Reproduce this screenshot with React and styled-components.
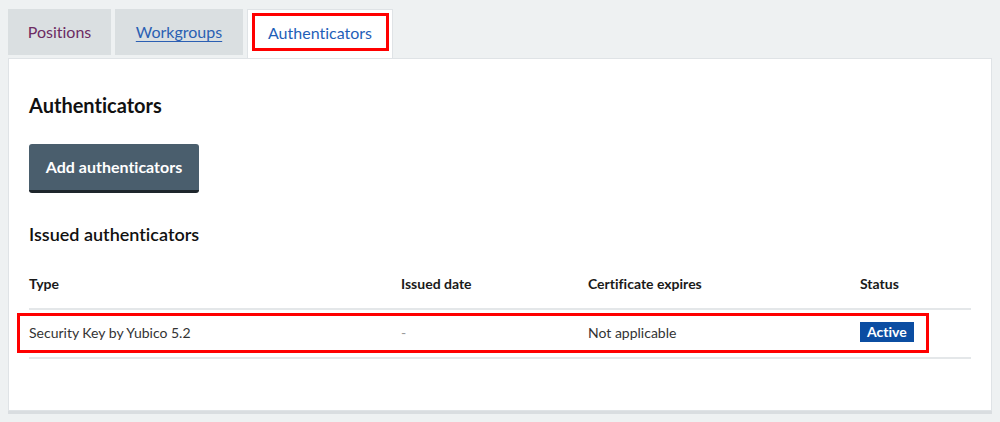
import React from "react";
import styled, { createGlobalStyle } from "styled-components";

const Global = createGlobalStyle`
  html, body { margin: 0; padding: 0; }
  body {
    background: #eef1f2;
    font-family: "Lato", "Noto Sans", sans-serif;
    font-variant-ligatures: none;
    color: #222;
  }
`;

const Page = styled.div`
  padding: 9px 8px 8px 8px;
  width: 984px;
`;

const TabList = styled.div`
  display: flex;
  gap: 4px;
  align-items: flex-end;
  height: 49px;
`;

const Tab = styled.a`
  box-sizing: border-box;
  display: flex;
  align-items: center;
  justify-content: center;
  width: ${(p) => p.$w}px;
  height: ${(p) => (p.$active ? 49 : 46)}px;
  align-self: flex-start;
  background: ${(p) => (p.$active ? "#fff" : "#dadfe1")};
  border: ${(p) => (p.$active ? "1px solid #dfe3e6" : "none")};
  border-bottom: none;
  margin-bottom: ${(p) => (p.$active ? "-1px" : "0")};
  position: relative;
  z-index: 1;
  font-size: 16px;
  color: ${(p) => p.$color};
  text-decoration: ${(p) => (p.$underline ? "underline" : "none")};
  text-underline-offset: 3px;
  padding-bottom: ${(p) => (p.$active ? "0" : "2px")};
`;

const Highlight = styled.span`
  box-sizing: border-box;
  display: flex;
  align-items: center;
  justify-content: center;
  width: 137px;
  height: 38px;
  border: 3px solid #f00;
  margin-top: -4px;
`;

const Panel = styled.section`
  box-sizing: border-box;
  background: #fff;
  border: 1px solid #dfe3e6;
  height: 353px;
  padding: 33px 20px 0 20px;
  box-shadow: 0 3px 0 #d9dde0;
`;

const Heading = styled.h2`
  margin: 0;
  font-size: 20px;
  font-weight: 700;
  color: #111;
  line-height: 26px;
`;

const Button = styled.button`
  box-sizing: border-box;
  margin-top: 26px;
  width: 170px;
  height: 49px;
  border: none;
  border-bottom: 3px solid #1e262c;
  border-radius: 3px;
  background: #4a5e6d;
  color: #fff;
  font-family: inherit;
  font-variant-ligatures: none;
  font-size: 16px;
  font-weight: 700;
  padding: 0 0 2px 0;
`;

const SubHeading = styled.h3`
  margin: 29px 0 0 0;
  font-size: 18px;
  font-weight: 600;
  color: #111;
  line-height: 24px;
`;

const Table = styled.div`
  margin-top: 16px;
  width: 942px;
`;

const Row = styled.div`
  display: grid;
  grid-template-columns: 372px 187px 272px 1fr;
  align-items: center;
  height: ${(p) => p.$h}px;
  border-bottom: 2px solid #e4e7e9;
  position: relative;
`;

const HeadCell = styled.div`
  font-size: 14px;
  font-weight: 700;
  color: #1a1a1a;
  padding-bottom: 4px;
`;

const Cell = styled.div`
  font-size: 14px;
  padding-bottom: 3px;
  color: ${(p) => (p.$muted ? "#999" : "#333")};
`;

const RowMark = styled.div`
  position: absolute;
  left: -12px;
  top: 3px;
  width: 912px;
  height: 40px;
  box-sizing: border-box;
  border: 3px solid #f00;
  pointer-events: none;
`;

const Badge = styled.span`
  display: inline-block;
  background: #0b4da2;
  color: #fff;
  font-size: 14px;
  font-weight: 700;
  padding: 1px 7px 2px;
  line-height: 17px;
`;

export default function App() {
  return (
    <>
      <Global />
      <Page>
        <TabList>
          <Tab $w={103} $color="#6d2b63">Positions</Tab>
          <Tab $w={128} $color="#2b5fb3" $underline>Workgroups</Tab>
          <Tab $w={146} $active $color="#1f5fb8">
            <Highlight>Authenticators</Highlight>
          </Tab>
        </TabList>
        <Panel>
          <Heading>Authenticators</Heading>
          <Button>Add authenticators</Button>
          <SubHeading>Issued authenticators</SubHeading>
          <Table>
            <Row $h={46}>
              <HeadCell>Type</HeadCell>
              <HeadCell>Issued date</HeadCell>
              <HeadCell>Certificate expires</HeadCell>
              <HeadCell>Status</HeadCell>
            </Row>
            <Row $h={47}>
              <RowMark />
              <Cell>Security Key by Yubico 5.2</Cell>
              <Cell $muted>-</Cell>
              <Cell>Not applicable</Cell>
              <Cell>
                <Badge>Active</Badge>
              </Cell>
            </Row>
          </Table>
        </Panel>
      </Page>
    </>
  );
}
